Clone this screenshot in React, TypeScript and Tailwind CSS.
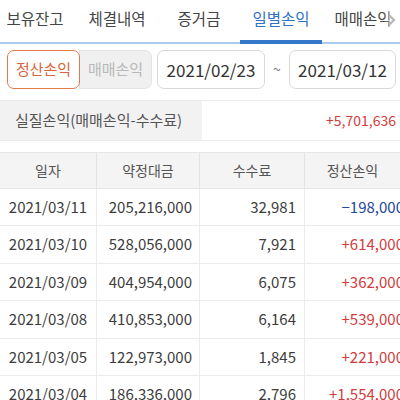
import { ChevronRight } from "lucide-react";

const tabs = ["보유잔고", "체결내역", "증거금", "일별손익", "매매손익"];

const rows = [
  { date: "2021/03/11", amount: "205,216,000", fee: "32,981", pnl: "−198,000", up: false },
  { date: "2021/03/10", amount: "528,056,000", fee: "7,921", pnl: "+614,000", up: true },
  { date: "2021/03/09", amount: "404,954,000", fee: "6,075", pnl: "+362,000", up: true },
  { date: "2021/03/08", amount: "410,853,000", fee: "6,164", pnl: "+539,000", up: true },
  { date: "2021/03/05", amount: "122,973,000", fee: "1,845", pnl: "+221,000", up: true },
  { date: "2021/03/04", amount: "186,336,000", fee: "2,796", pnl: "+1,554,000", up: true },
];

export default function App() {
  return (
    <div
      className="w-[400px] h-[400px] overflow-hidden bg-white text-[#3d3d3d]"
      style={{ fontFamily: '"Noto Sans CJK KR", "Noto Sans", sans-serif' }}
    >
      {/* Tabs */}
      <div className="relative h-[44px] border-b-2 border-[#a9cbec]">
        <div className="flex h-full ml-[-6px]">
          {tabs.map((t, i) => (
            <div
              key={t}
              className={`relative w-[82px] shrink-0 flex items-center justify-center pb-[4px] text-[15.5px] ${
                i === 3 ? "text-[#2f72c6]" : "text-[#454545]"
              }`}
            >
              {t}
              {i === 3 && <div className="absolute left-0 right-0 bottom-[-2px] h-[4px] bg-[#3577c9]" />}
            </div>
          ))}
        </div>
        <div className="absolute right-0 top-0 h-[40px] w-[16px] flex items-center justify-end bg-gradient-to-r from-transparent to-white">
          <ChevronRight className="w-[16px] h-[24px] text-[#b8b8b8]" strokeWidth={3.5} />
        </div>
      </div>

      {/* Filter row */}
      <div className="flex items-center h-[50px] pl-[7px] pt-[1px]">
        <div className="flex h-[39px]">
          <div className="w-[73px] flex items-center justify-center border border-[#e27b4c] rounded-[7px] bg-white text-[#d9643a] text-[15px] relative z-10">
            정산손익
          </div>
          <div className="w-[73px] ml-[-1px] flex items-center justify-center border border-[#e3e3e3] rounded-r-[7px] bg-[#f0f0f0] text-[#b8b8b8] text-[15px]">
            매매손익
          </div>
        </div>
        <div className="ml-[5px] w-[108px] h-[39px] flex items-center justify-center border border-[#d9d9d9] rounded-[7px] text-[17px] text-[#333]">
          2021/02/23
        </div>
        <div className="w-[24px] text-center text-[14px] text-[#777]">~</div>
        <div className="w-[107px] h-[39px] flex items-center justify-center border border-[#d9d9d9] rounded-[7px] text-[17px] text-[#333]">
          2021/03/12
        </div>
      </div>

      {/* Summary */}
      <div className="mt-[6px] flex h-[41px] border-y border-[#ebebeb]">
        <div className="w-[202px] bg-[#f2f2f2] flex items-center pl-[15px] text-[15px] text-[#555]">
          실질손익(매매손익-수수료)
        </div>
        <div className="flex-1 flex items-center justify-end pr-[4px] text-[14px] text-[#d13c3c]">
          +5,701,636
        </div>
      </div>

      {/* Table */}
      <div className="mt-[11px] w-[410px] border-t border-[#e6e6e6]">
        <div className="grid grid-cols-[97px_103px_105px_105px] h-[36px] bg-[#f4f4f4] border-b border-[#e6e6e6] text-[14px] text-[#555]">
          <div className="flex items-center justify-center border-r border-[#e3e3e3]">일자</div>
          <div className="flex items-center justify-center border-r border-[#e3e3e3]">약정대금</div>
          <div className="flex items-center justify-center border-r border-[#e3e3e3]">수수료</div>
          <div className="flex items-center justify-center pr-[10px]">정산손익</div>
        </div>
        {rows.map((r) => (
          <div
            key={r.date}
            className="grid grid-cols-[97px_103px_105px_105px] h-[37.4px] border-b border-[#ececec] text-[15px]"
          >
            <div className="flex items-center justify-center border-r border-[#ececec]">{r.date}</div>
            <div className="flex items-center justify-end pr-[7px] border-r border-[#ececec]">{r.amount}</div>
            <div className="flex items-center justify-end pr-[8px] border-r border-[#ececec]">{r.fee}</div>
            <div className={`flex items-center justify-end pr-[6px] ${r.up ? "text-[#d13c3c]" : "text-[#26489c]"}`}>
              {r.pnl}
            </div>
          </div>
        ))}
      </div>
    </div>
  );
}
